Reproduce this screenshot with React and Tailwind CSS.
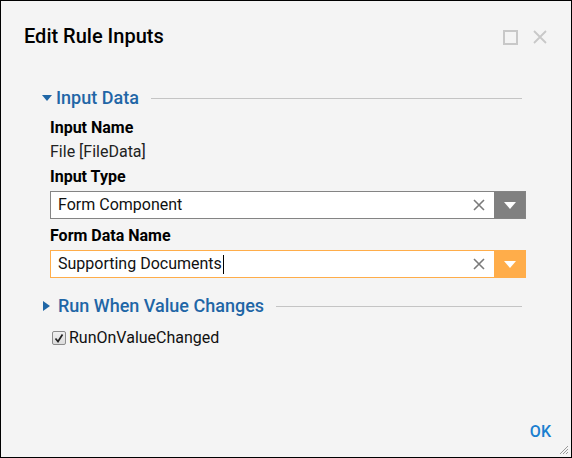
import { useState } from "react";

function Caret({ down }) {
  return down ? (
    <svg width="10" height="6" viewBox="0 0 10 6" className="mr-[4px]">
      <path d="M0 0H10L5 6Z" fill="#1f66a6" />
    </svg>
  ) : (
    <svg width="7" height="10" viewBox="0 0 7 10" className="mr-[8px] ml-[1px]">
      <path d="M0 0V10L7 5Z" fill="#1f66a6" />
    </svg>
  );
}

function SectionHeader({ open, title }) {
  return (
    <div className="mr-[4px] flex items-center">
      <Caret down={open} />
      <span className="text-[18px] leading-none text-[#1f66a6] font-medium">{title}</span>
      <div className="ml-[12px] h-px flex-1 bg-[#c4c4c4]" />
    </div>
  );
}

function Picker({ value, accent, caret }) {
  return (
    <div
      className={`flex h-[28px] items-stretch border bg-white ${accent ? "border-[#ffad4a]" : "border-[#848484]"}`}
    >
      <div className="flex flex-1 items-center pl-[7px] text-[16px] text-[#111]">
        {value}
        {caret && <span className="ml-px inline-block h-[19px] w-px bg-black" />}
      </div>
      <div className="flex w-[30px] items-center justify-center">
        <svg width="12" height="12" viewBox="0 0 12 12">
          <path d="M1 1L11 11M11 1L1 11" stroke="#7a7a7a" strokeWidth="1.6" />
        </svg>
      </div>
      <div
        className={`flex w-[31px] items-center justify-center ${accent ? "bg-[#ffad4a]" : "bg-[#808080]"}`}
      >
        <svg width="12" height="7" viewBox="0 0 12 7">
          <path d="M0 0H12L6 7Z" fill="#fff" />
        </svg>
      </div>
    </div>
  );
}

export default function App() {
  const [checked, setChecked] = useState(true);
  return (
    <div
      className="relative h-[458px] w-[572px] border border-black bg-[#f4f4f4]"
      style={{ fontFamily: "Roboto, 'Liberation Sans', sans-serif" }}
    >
      {/* Title bar */}
      <div className="flex items-center justify-between pl-[23px] pr-[24px] pt-[22px]">
        <h1 className="text-[20px] font-medium leading-[26px] text-black">Edit Rule Inputs</h1>
        <div className="flex items-center gap-[15px] pt-[2px]">
          <div className="h-[15px] w-[15px] border-2 border-[#c8c8c8]" />
          <svg width="14" height="14" viewBox="0 0 14 14">
            <path d="M1 1L13 13M13 1L1 13" stroke="#c8c8c8" strokeWidth="1.8" />
          </svg>
        </div>
      </div>

      {/* Body */}
      <div className="pl-[41px] pr-[45px] pt-[40px]">
        <SectionHeader open title="Input Data" />
        <div className="pl-[8px]">
          <div className="mt-[11px] text-[16px] font-bold leading-[20px] text-black">Input Name</div>
          <div className="mt-[4px] text-[16px] leading-[20px] text-[#222]">File [FileData]</div>
          <div className="mt-[5px] text-[16px] font-bold leading-[20px] text-black">Input Type</div>
          <div className="mt-[4px]">
            <Picker value="Form Component" />
          </div>
          <div className="mt-[7px] text-[16px] font-bold leading-[20px] text-black">Form Data Name</div>
          <div className="mt-[4px]">
            <Picker value="Supporting Documents" accent caret />
          </div>
        </div>

        <div className="mt-[19px]">
          <SectionHeader title="Run When Value Changes" />
        </div>
        <label
          className="mt-[13px] ml-[10px] flex items-center gap-[3px] text-[16px] leading-[20px] text-[#111]"
          onClick={() => setChecked(!checked)}
        >
          <span className="flex h-[14px] w-[14px] items-center justify-center rounded-[2px] border border-[#8c8c8c] bg-gradient-to-b from-[#f0f0f0] to-[#dcdcdc]">
            {checked && (
              <svg width="10" height="10" viewBox="0 0 10 10">
                <path d="M1.5 5.5L4 8.5L8.5 1.5" fill="none" stroke="#222" strokeWidth="1.7" />
              </svg>
            )}
          </span>
          RunOnValueChanged
        </label>
      </div>

      {/* Footer */}
      <div className="absolute bottom-[13px] right-[20px] text-[16px] font-medium text-[#1a7fd0]">OK</div>
      <svg className="absolute bottom-[2px] right-[2px]" width="11" height="11" viewBox="0 0 11 11">
        <path d="M10 2L2 10M10 5L5 10M10 8L8 10" stroke="#9a9a9a" strokeWidth="1" />
      </svg>
    </div>
  );
}
